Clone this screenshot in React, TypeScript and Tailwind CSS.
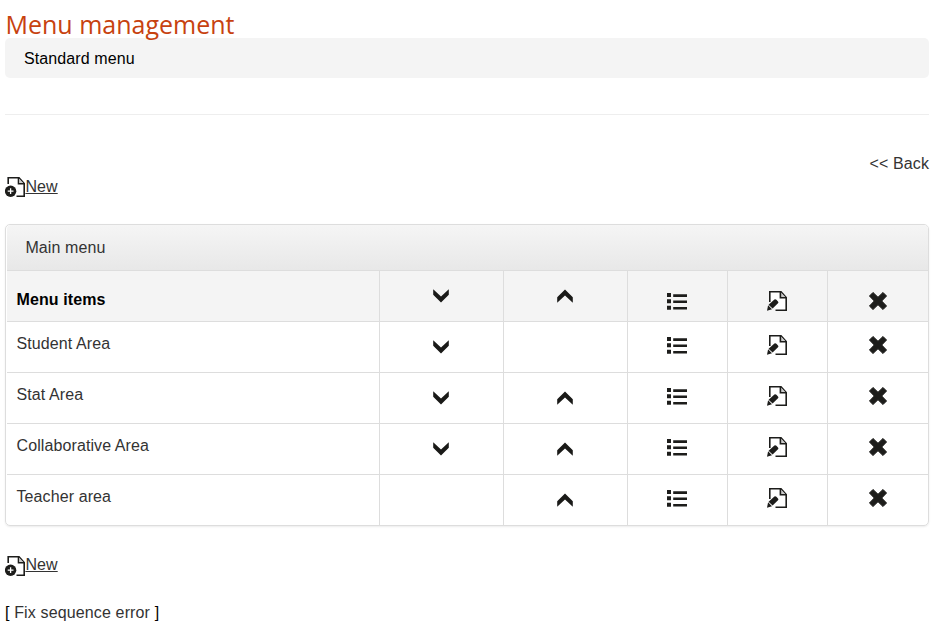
import type { ReactNode } from "react";

function ChevronIcon({ up = false }: { up?: boolean }) {
  return (
    <svg viewBox="0 0 20 20" className={up ? "size-5 rotate-180" : "size-5"} aria-hidden>
      <path d="M2.2 3.3 10 10.4 17.8 3.3V8.8L10 16.4 2.2 8.8z" fill="#1a1a18" />
    </svg>
  );
}

function ListIcon() {
  return (
    <svg viewBox="0 0 20 20" className="size-5" fill="#1d1d1b" aria-hidden>
      <path d="M0 2h4v4H0zM0 8.3h4v4H0zM0 14.8h4v4H0z" />
      <path d="M6.2 3.2H20v2.7H6.2zM6.2 9.5H20v2.6H6.2zM6.2 16H20v2.6H6.2z" />
    </svg>
  );
}

function EditIcon() {
  return (
    <svg viewBox="0 0 20 20" className="size-5" aria-hidden>
      <path d="M2.8 .8H14L19.2 6.5V19.2H9L5 13 2.8 11z" fill="#fff" />
      <path d="M2.8 11V.8H14L19.2 6.5V19.2H8.5" fill="none" stroke="#1d1d1b" strokeWidth="1.6" />
      <path d="M13.4 1V6.8H19" fill="#ccc" stroke="#1d1d1b" strokeWidth="1.6" />
      <path d="M7.4 8.6Q8.4 7.8 9.4 8.8L11 10.4Q11.9 11.4 11 12.3L5.6 17.6 1.6 13.8z" fill="#1d1d1b" />
      <path d="M1.1 14.3 5 18.2 0 19.8z" fill="#1d1d1b" />
    </svg>
  );
}

function DeleteIcon() {
  return (
    <svg viewBox="0 0 20 20" className="size-5" aria-hidden>
      <path
        d="M5 1.4 10 6.2 15 1.4 18.6 5 13.8 10 18.6 15 15 18.6 10 13.8 5 18.6 1.4 15 6.2 10 1.4 5z"
        fill="#1d1d1b"
        stroke="#1d1d1b"
        strokeWidth=".9"
        strokeLinejoin="round"
      />
    </svg>
  );
}

function NewIcon() {
  return (
    <svg viewBox="0 0 20 20" className="size-5" aria-hidden>
      <path d="M3.2 7V.8H14L19.2 6.5V19.2H11.5" fill="none" stroke="#1d1d1b" strokeWidth="1.6" />
      <path d="M13.4 1V6.8H19" fill="#ccc" stroke="#1d1d1b" strokeWidth="1.4" />
      <circle cx="5.6" cy="14.2" r="5.7" fill="#1d1d1b" />
      <path d="M5.6 11.3v5.8M2.7 14.2h5.8" stroke="#fff" strokeWidth="1.3" />
    </svg>
  );
}

function NewLink({ className = "-mt-0.5" }: { className?: string }) {
  return (
    <a className="flex h-5 w-fit items-start">
      <NewIcon />
      <span className={`pl-[0.4px] underline underline-offset-1 ${className}`}>New</span>
    </a>
  );
}

function Cell({ children, className }: { children?: ReactNode; className: string }) {
  return <div className={`flex justify-center border-l border-[#ddd] ${className}`}>{children}</div>;
}

const items = [
  { name: "Menu items", header: true, down: true, up: true },
  { name: "Student Area", down: true, up: false },
  { name: "Stat Area", down: true, up: true },
  { name: "Collaborative Area", down: true, up: true },
  { name: "Teacher area", down: false, up: true },
];

export default function App() {
  return (
    <div className="h-[635px] overflow-hidden bg-white pl-[5px] pr-[13px] font-['Liberation_Sans',Arial,sans-serif] text-base leading-6 tracking-[0.1px] text-[#333]">
      <h1 className="h-[38px] pl-[0.5px] pt-1.5 font-['Open_Sans',sans-serif] text-[25px] leading-9 tracking-normal text-[#c7420f]">
        Menu management
      </h1>
      <div className="h-10 rounded-[5px] bg-[#f4f4f4] px-[19px] pt-[9px] text-black">Standard menu</div>
      <hr className="mt-9 border-[#eee]" />
      <div className="mt-[37px] text-right">&lt;&lt; Back</div>
      <div className="mt-px">
        <NewLink />
      </div>

      <div className="mt-[27px] h-[302px] rounded-[5px] border border-[#ddd] pl-px shadow-[0_1px_2px_rgba(0,0,0,0.08)]">
        <div className="h-[45px] rounded-t bg-linear-to-b from-[#f5f5f5] to-[#e8e8e8] pl-[18.4px] pt-[11px]">
          Main menu
        </div>
        {items.map((item) => (
          <div
            key={item.name}
            className={`grid h-[51px] grid-cols-[372px_124px_124px_100px_100px_1fr] border-t border-[#ddd] ${
              item.header ? "bg-[#f4f4f4]" : ""
            }`}
          >
            <div className={item.header ? "pl-[9.5px] pt-[17px] font-bold text-black" : "pl-[9.5px] pt-2.5"}>
              {item.name}
            </div>
            <Cell className="pr-px pt-[15px]">{item.down && <ChevronIcon />}</Cell>
            <Cell className="pr-px pt-[15px]">{item.up && <ChevronIcon up />}</Cell>
            <Cell className={item.header ? "pr-[2px] pt-5" : "pr-[2px] pt-[13px]"}>
              <ListIcon />
            </Cell>
            <Cell className={item.header ? "pr-[2px] pt-5" : "pr-[2px] pt-[13px]"}>
              <EditIcon />
            </Cell>
            <Cell className={item.header ? "pt-5" : "pt-[13px]"}>
              <DeleteIcon />
            </Cell>
          </div>
        ))}
      </div>

      <div className="mt-[30px]">
        <NewLink className="-mt-[3px]" />
      </div>
      <p className="mt-[25px] tracking-[0.14px]">
        <span className="text-black">[</span> Fix sequence error <span className="text-black">]</span>
      </p>
    </div>
  );
}
